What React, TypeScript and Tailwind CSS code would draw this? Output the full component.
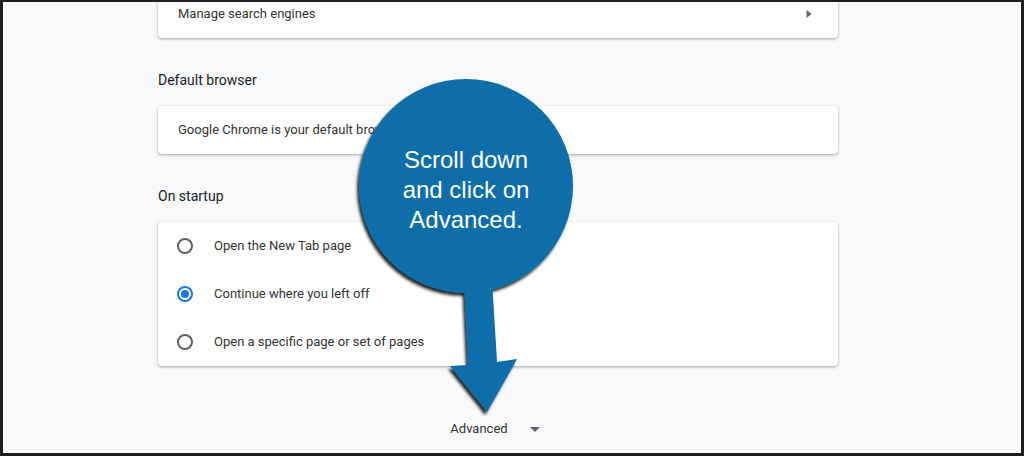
const rowText = "text-[13px] text-[#333333]";

function Radio({ checked }: { checked?: boolean }) {
  return (
    <svg width="18" height="18" viewBox="0 0 18 18" className="shrink-0">
      <circle cx="9" cy="9" r="7" fill="none" stroke={checked ? "#1a73e8" : "#5f6368"} strokeWidth="2" />
      {checked && <circle cx="9" cy="9" r="4" fill="#1a73e8" />}
    </svg>
  );
}

function Card({ children }: { children: React.ReactNode }) {
  return (
    <div className="rounded-[4px] bg-white shadow-[0_1px_2px_rgba(60,64,67,0.3),0_1px_3px_1px_rgba(60,64,67,0.12)]">
      {children}
    </div>
  );
}

function StartupOption({ label, checked }: { label: string; checked?: boolean }) {
  return (
    <div className="flex h-12 items-center gap-[20px] pl-[18px]">
      <Radio checked={checked} />
      <span className={rowText}>{label}</span>
    </div>
  );
}

function Callout() {
  return (
    <div className="pointer-events-none absolute inset-0">
      <svg width="1024" height="456" viewBox="0 0 1024 456" className="absolute left-0 top-0">
        <defs>
          <filter id="sh" x="-20%" y="-20%" width="140%" height="140%">
            <feDropShadow dx="-2" dy="3" stdDeviation="1.5" floodColor="#000" floodOpacity="0.85" />
          </filter>
        </defs>
        <g filter="url(#sh)" fill="#0a6ea9">
          <circle cx="466" cy="186" r="107" />
          <polygon points="464,280 492,280 497,362 517,359 487,412 450,366 468,365" />
        </g>
      </svg>
      <div className="absolute left-[366px] top-[145px] w-[200px] text-center font-['Liberation_Sans',Arial,sans-serif] text-[24px] leading-[30px] text-white">
        Scroll down
        <br />
        and click on
        <br />
        Advanced.
      </div>
    </div>
  );
}

export default function App() {
  return (
    <div className="relative h-[456px] w-[1024px] overflow-hidden font-['Roboto',Arial,sans-serif]">
      <div className="h-full w-full overflow-hidden border-x-[3px] border-b-[3px] border-t-2 border-solid border-[#1e1e1e] bg-[#f8f9fa]">
        <div className="ml-[155px] flex w-[680px] flex-col">
          <div className="-mt-[12px]">
            <Card>
              <div className="flex h-12 items-center justify-between pl-5 pr-[26px]">
                <span className={rowText}>Manage search engines</span>
                <svg width="6" height="10" viewBox="0 0 6 10">
                  <polygon points="0.5,1 5.5,5 0.5,9" fill="#5f6368" />
                </svg>
              </div>
            </Card>
          </div>

          <h2 className="mb-4 mt-8 text-[14px] leading-5 text-[#202124]">Default browser</h2>
          <Card>
            <div className="flex h-12 items-center pl-5">
              <span className={rowText}>Google Chrome is your default browser</span>
            </div>
          </Card>

          <h2 className="mb-4 mt-8 text-[14px] leading-5 text-[#202124]">On startup</h2>
          <Card>
            <StartupOption label="Open the New Tab page" />
            <StartupOption label="Continue where you left off" checked />
            <StartupOption label="Open a specific page or set of pages" />
          </Card>

          <div className="mt-[53px] flex h-5 items-center justify-center gap-[22px] pr-[6px]">
            <span className="text-[13px] text-[#333333]">Advanced</span>
            <svg width="10" height="5" viewBox="0 0 10 5">
              <polygon points="0,0 10,0 5,5" fill="#5f6368" />
            </svg>
          </div>
        </div>
      </div>
      <Callout />
    </div>
  );
}
